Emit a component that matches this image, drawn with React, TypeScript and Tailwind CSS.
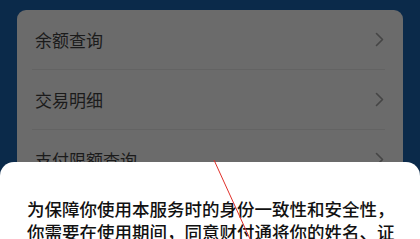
const rows: string[] = ["余额查询", "交易明细", "支付限额查询"];

function Chevron() {
  return (
    <svg width="9" height="15" viewBox="0 0 9 15" fill="none">
      <path d="M1.5 1.5 L7.5 7.5 L1.5 13.5" stroke="#454545" strokeWidth="1.6" strokeLinecap="round" strokeLinejoin="round" />
    </svg>
  );
}

export default function App() {
  return (
    <div
      className="relative w-[420px] h-[239px] overflow-hidden bg-[#0b2a4a]"
      style={{ fontFamily: '"Noto Sans CJK SC", "Noto Sans", sans-serif' }}
    >
      {/* dimmed list card */}
      <div className="pt-[10px] px-[17px]">
        <div className="rounded-[9px] bg-[#6b6b6b]">
          {rows.map((label, i) => (
            <div key={label}>
              {i > 0 && <div className="ml-[15px] mr-[18px] h-px bg-[#636363]" />}
              <div className="flex h-[59px] items-center justify-between pl-[18px] pr-[19px]">
                <span className="text-[17px] leading-none text-[#1b1b1b]">{label}</span>
                <Chevron />
              </div>
            </div>
          ))}
        </div>
      </div>

      {/* bottom sheet */}
      <div className="absolute left-0 right-0 top-[162px] bottom-0 rounded-t-[14px] bg-white pt-[35px] pl-[27px] pr-[20px]">
        <p className="w-[368px] text-[17.5px] leading-[23px] font-medium text-[#111111] break-all">
          为保障你使用本服务时的身份一致性和安全性，你需要在使用期间，同意财付通将你的姓名、证件号码等信息提供给银行进行校验。
        </p>
      </div>

      {/* annotation line */}
      <svg className="absolute left-0 top-0 pointer-events-none" width="420" height="239">
        <line x1="214" y1="160" x2="250" y2="239" stroke="#e0302a" strokeWidth="1" />
      </svg>
    </div>
  );
}
